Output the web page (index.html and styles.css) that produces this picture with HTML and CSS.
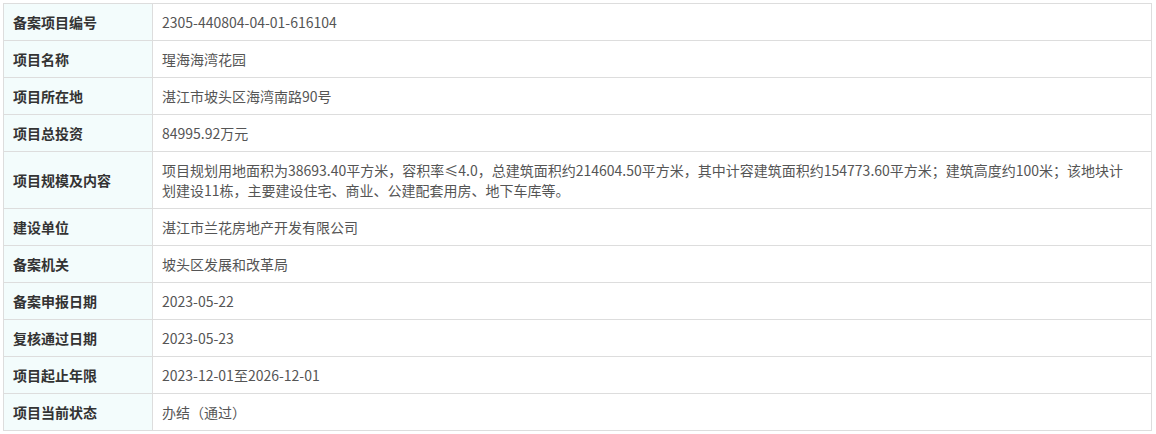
FILE: index.html
```html
<!DOCTYPE html>
<html lang="zh-CN">
<head>
    <meta charset="UTF-8">
    <meta name="viewport" content="width=device-width, initial-scale=1.0">
    <title>项目备案信息</title>
    <link rel="stylesheet" href="styles.css">
</head>
<body>
    <table class="info-table">
        <colgroup>
            <col class="label-col">
            <col>
        </colgroup>
        <tbody>
            <tr><th>备案项目编号</th><td>2305-440804-04-01-616104</td></tr>
            <tr><th>项目名称</th><td>瑆海海湾花园</td></tr>
            <tr><th>项目所在地</th><td>湛江市坡头区海湾南路90号</td></tr>
            <tr><th>项目总投资</th><td>84995.92万元</td></tr>
            <tr><th>项目规模及内容</th><td>项目规划用地面积为38693.40平方米，容积率≤4.0，总建筑面积约214604.50平方米，其中计容建筑面积约154773.60平方米；建筑高度约100米；该地块计划建设11栋，主要建设住宅、商业、公建配套用房、地下车库等。</td></tr>
            <tr><th>建设单位</th><td>湛江市兰花房地产开发有限公司</td></tr>
            <tr><th>备案机关</th><td>坡头区发展和改革局</td></tr>
            <tr><th>备案申报日期</th><td>2023-05-22</td></tr>
            <tr><th>复核通过日期</th><td>2023-05-23</td></tr>
            <tr><th>项目起止年限</th><td>2023-12-01至2026-12-01</td></tr>
            <tr><th>项目当前状态</th><td>办结（通过）</td></tr>
        </tbody>
    </table>
</body>
</html>
```

FILE: styles.css
```css
body {
    margin: 3px;
    background: #fff;
    font-family: "Noto Sans CJK SC", "Noto Sans", sans-serif;
    font-size: 14px;
}
.info-table {
    width: 1149px;
    border-collapse: collapse;
    table-layout: fixed;
}
.label-col {
    width: 149px;
}
.info-table th,
.info-table td {
    border: 1px solid #dddddd;
    padding: 8px 9px;
    line-height: 20px;
    text-align: left;
    vertical-align: middle;
}
.info-table th {
    background: #f3fcfc;
    color: #333;
    font-weight: bold;
}
.info-table td {
    color: #555;
    padding-right: 16px;
}
```
